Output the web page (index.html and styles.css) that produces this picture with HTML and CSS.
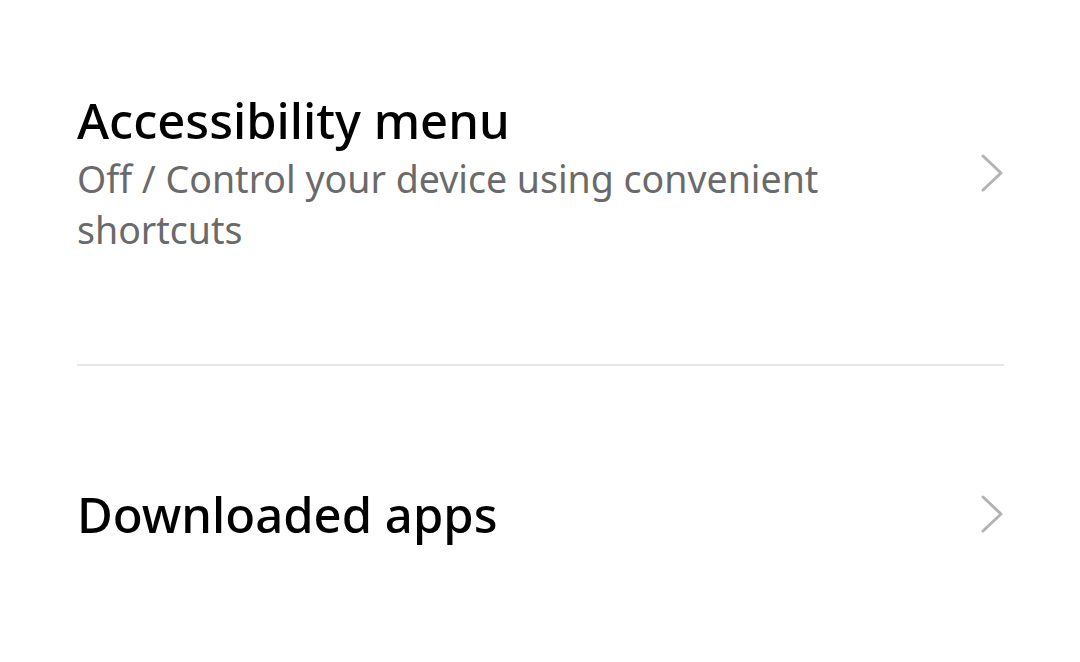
FILE: index.html
```html
<!DOCTYPE html>
<html>
<head>
<meta charset="utf-8">
<link rel="stylesheet" href="styles.css">
</head>
<body>
<div class="list">
  <div class="item item-first">
    <div class="text">
      <div class="title">Accessibility menu</div>
      <div class="summary">Off / Control your device using convenient shortcuts</div>
    </div>
    <svg class="chevron" width="24" height="40" viewBox="0 0 24 40"><polyline points="3,3 21,20 3,37" fill="none" stroke="#b3b3b3" stroke-width="3" stroke-linecap="round" stroke-linejoin="round"/></svg>
  </div>
  <div class="item item-second">
    <div class="text">
      <div class="title">Downloaded apps</div>
    </div>
    <svg class="chevron" width="24" height="40" viewBox="0 0 24 40"><polyline points="3,3 21,20 3,37" fill="none" stroke="#b3b3b3" stroke-width="3" stroke-linecap="round" stroke-linejoin="round"/></svg>
  </div>
</div>
</body>
</html>
```
FILE: styles.css
```css
html, body {
  margin: 0;
  background: #ffffff;
  overflow: hidden;
}
body {
  font-family: "Noto Sans", "Liberation Sans", sans-serif;
}
.list {
  padding: 0 76px 0 77px;
}
.item {
  display: flex;
  align-items: center;
  justify-content: space-between;
  gap: 80px;
}
.item-first {
  padding: 90px 0 109px;
  border-bottom: 2px solid #e6e6e6;
}
.item-second {
  padding: 118px 0 120px;
}
.text {
  flex: 1;
}
.title {
  font-size: 49px;
  font-weight: 500;
  line-height: 60px;
  color: #000;
}
.summary {
  font-size: 37.5px;
  line-height: 51px;
  margin-top: 3px;
  color: #6a6a6a;
}
.chevron {
  flex: none;
  display: block;
}
```
